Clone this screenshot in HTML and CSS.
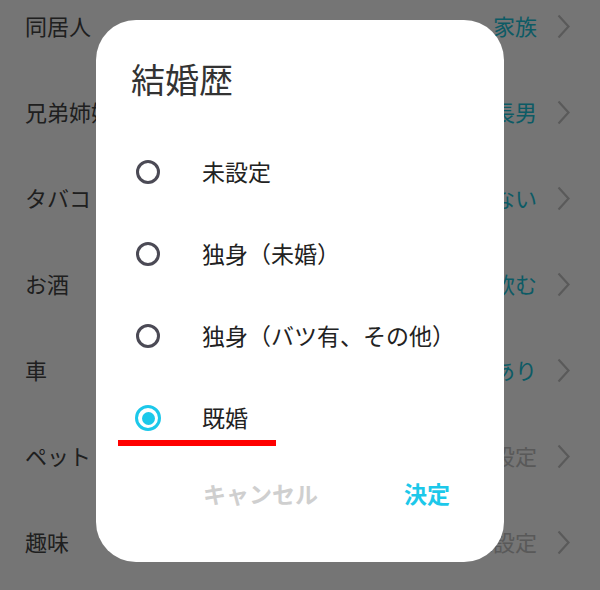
FILE: index.html
```html
<!DOCTYPE html>
<html lang="ja">

<head>
    <meta charset="UTF-8">
    <meta name="viewport" content="width=device-width, initial-scale=1.0">
    <title>結婚歴</title>
    <link rel="stylesheet" href="styles.css">
</head>

<body>

    <ul class="profile-list">
        <li class="row"><span class="label">同居人</span><span class="value">家族</span><svg class="chevron" viewBox="0 0 13 25"><path d="M1.5 1.5 L11.5 12.5 L1.5 23.5" /></svg></li>
        <li class="row"><span class="label">兄弟姉妹</span><span class="value">長男</span><svg class="chevron" viewBox="0 0 13 25"><path d="M1.5 1.5 L11.5 12.5 L1.5 23.5" /></svg></li>
        <li class="row"><span class="label">タバコ</span><span class="value">吸わない</span><svg class="chevron" viewBox="0 0 13 25"><path d="M1.5 1.5 L11.5 12.5 L1.5 23.5" /></svg></li>
        <li class="row"><span class="label">お酒</span><span class="value">飲む</span><svg class="chevron" viewBox="0 0 13 25"><path d="M1.5 1.5 L11.5 12.5 L1.5 23.5" /></svg></li>
        <li class="row"><span class="label">車</span><span class="value">あり</span><svg class="chevron" viewBox="0 0 13 25"><path d="M1.5 1.5 L11.5 12.5 L1.5 23.5" /></svg></li>
        <li class="row"><span class="label">ペット</span><span class="value empty">未設定</span><svg class="chevron" viewBox="0 0 13 25"><path d="M1.5 1.5 L11.5 12.5 L1.5 23.5" /></svg></li>
        <li class="row"><span class="label">趣味</span><span class="value empty">未設定</span><svg class="chevron" viewBox="0 0 13 25"><path d="M1.5 1.5 L11.5 12.5 L1.5 23.5" /></svg></li>
    </ul>

    <!-- Dialog -->
    <div class="overlay">
        <div class="dialog">
            <h2 class="dialog-title">結婚歴</h2>
            <div class="options">
                <label class="option"><span class="radio"></span>未設定</label>
                <label class="option"><span class="radio"></span>独身（未婚）</label>
                <label class="option"><span class="radio"></span>独身（バツ有、その他）</label>
                <label class="option checked"><span class="radio"></span>既婚<span class="mark"></span></label>
            </div>
            <div class="dialog-footer">
                <button class="btn cancel">キャンセル</button>
                <button class="btn ok">決定</button>
            </div>
        </div>
    </div>

</body>

</html>
```

FILE: styles.css
```css
* {
    margin: 0;
    padding: 0;
    box-sizing: border-box;
}

body {
    font-family: "Noto Sans CJK JP", "Noto Sans", sans-serif;
    background-color: #fff;
    width: 600px;
    height: 590px;
    overflow: hidden;
}

/* List behind the dialog */
.profile-list {
    list-style: none;
    margin-top: -18px;
}

.row {
    display: flex;
    align-items: center;
    height: 86px;
    padding: 0 30px 0 25px;
    font-size: 22px;
}

.label {
    flex: 1;
    color: #444;
}

.value {
    color: #1cc6dc;
}

.value.empty {
    color: #c2c2c2;
}

.chevron {
    width: 13px;
    height: 25px;
    margin-left: 20px;
    margin-top: 2px;
    fill: none;
    stroke: #c4c4c4;
    stroke-width: 2.2;
}

/* Dialog */
.overlay {
    position: fixed;
    inset: 0;
    background-color: rgba(0, 0, 0, 0.54);
    display: flex;
    justify-content: center;
    align-items: flex-start;
    padding-top: 20px;
}

.dialog {
    background: #fff;
    width: 408px;
    height: 542px;
    border-radius: 40px;
}

.dialog-title {
    font-size: 34px;
    font-weight: 400;
    line-height: 40px;
    color: #333;
    margin: 39px 0 0 35px;
}

.options {
    margin-top: 31px;
}

.option {
    position: relative;
    display: flex;
    align-items: center;
    height: 82px;
    padding-left: 40px;
    font-size: 23px;
    color: #222;
}

.radio {
    width: 24px;
    height: 24px;
    border: 3px solid #4b4a55;
    border-radius: 50%;
    margin-right: 42px;
    margin-top: 2px;
    display: flex;
    align-items: center;
    justify-content: center;
}

.option.checked .radio {
    width: 26px;
    height: 26px;
    margin-left: -1px;
    margin-right: 41px;
    border-color: #1cc8ea;
}

.option.checked .radio::after {
    content: "";
    width: 13px;
    height: 13px;
    border-radius: 50%;
    background: #1cc8ea;
}

/* red underline annotation */
.mark {
    position: absolute;
    left: 22px;
    top: 64px;
    width: 158px;
    height: 6px;
    background: #f00;
}

.dialog-footer {
    display: flex;
    justify-content: space-between;
    align-items: center;
    height: 70px;
    padding: 0 54px 0 107px;
}

.btn {
    border: none;
    background: none;
    font-family: inherit;
    font-size: 23px;
    font-weight: 700;
    cursor: pointer;
}

.btn.cancel {
    color: #cfcfcf;
}

.btn.ok {
    color: #1cc8ea;
}
```
